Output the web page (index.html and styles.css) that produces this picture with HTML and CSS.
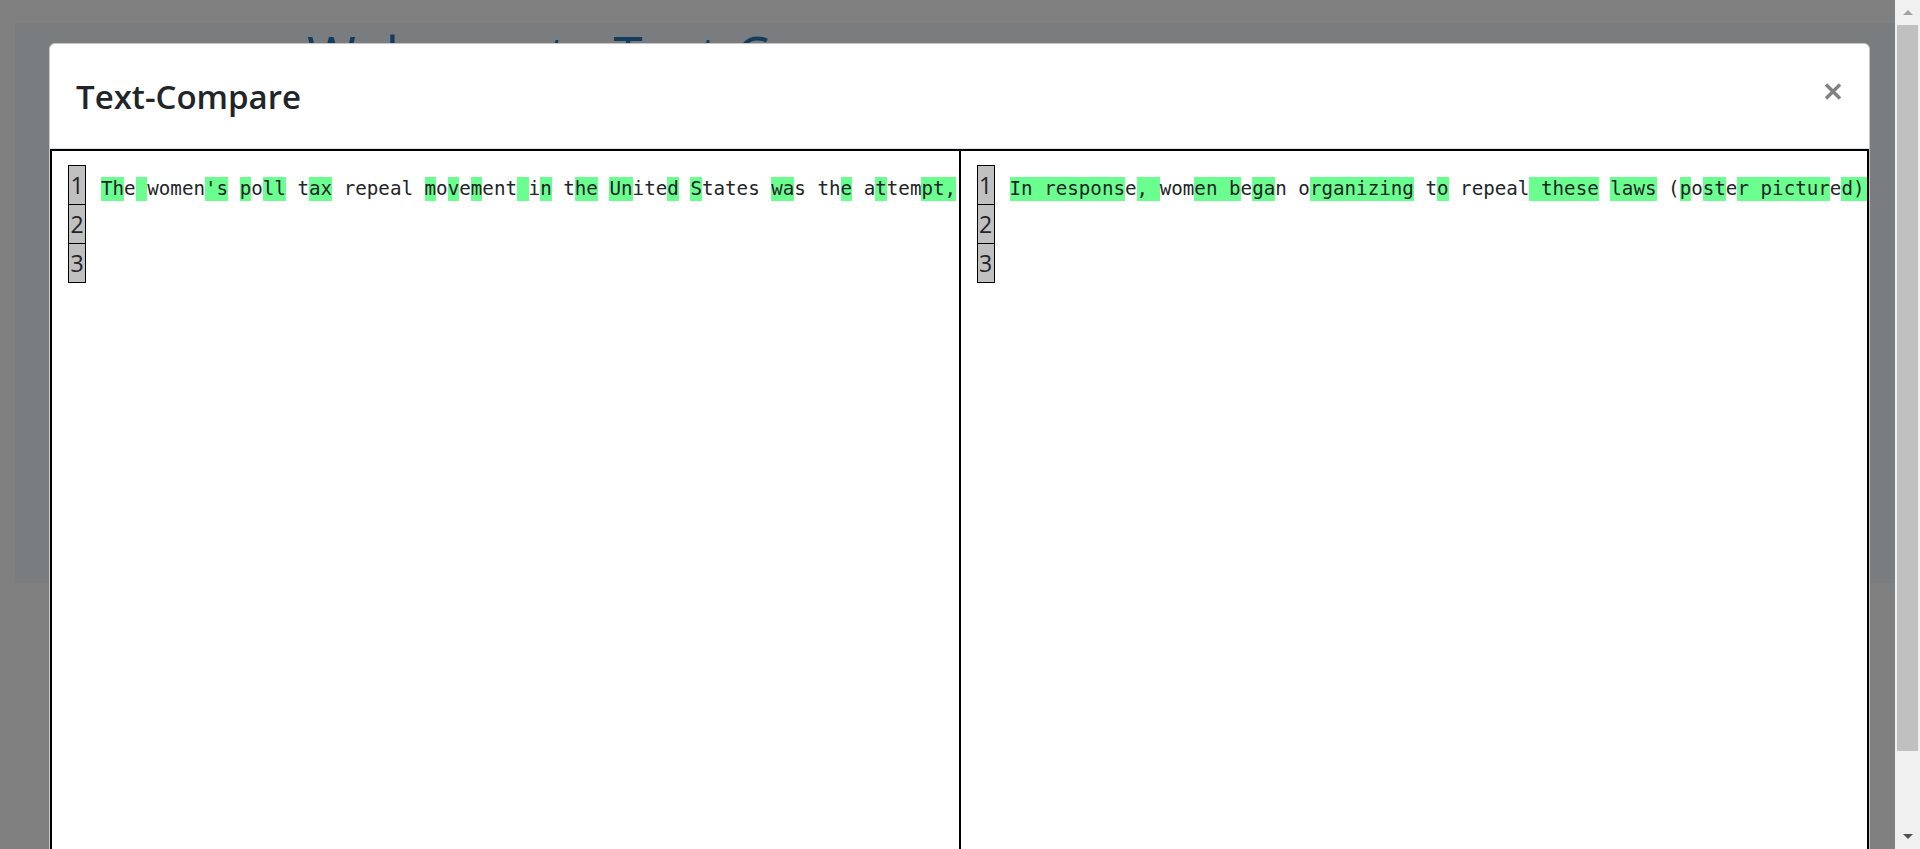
FILE: index.html
```html
<!DOCTYPE html>
<html lang="en">
<head>
<meta charset="utf-8">
<title>Text-Compare</title>
<link rel="stylesheet" href="styles.css">
</head>
<body>
<div class="screen">
  <div class="page">
    <div class="hero">
      <div class="container">
        <h1 class="display">Welcome to Text-Compare</h1>
      </div>
    </div>
  </div>
  <div class="scrollbar">
    <div class="sb-btn"><span class="tri-up"></span></div>
    <div class="sb-thumb"></div>
    <div class="sb-rest"></div>
    <div class="sb-btn"><span class="tri-down"></span></div>
  </div>
</div>

<div class="modal-layer">
  <div class="modal">
    <div class="modal-header">
      <h4 class="modal-title">Text-Compare</h4>
      <button class="close" type="button" aria-label="Close">
        <svg width="18" height="17" viewBox="0 0 18 17"><path d="M2 1.5 L16 15.5 M16 1.5 L2 15.5" stroke="#808080" stroke-width="3.4" fill="none"/></svg>
      </button>
    </div>
    <div class="compare">
      <div class="pane">
        <div class="gutter">
          <div class="ln">1</div>
          <div class="ln">2</div>
          <div class="ln">3</div>
        </div>
        <div class="code">
          <div class="line"><span class="hl">Th</span><span>e</span><span class="hl"> </span><span>women</span><span class="hl">'s</span><span> </span><span class="hl">p</span><span>o</span><span class="hl">ll</span><span> t</span><span class="hl">ax</span><span> repeal </span><span class="hl">m</span><span>o</span><span class="hl">v</span><span>e</span><span class="hl">m</span><span>ent</span><span class="hl"> </span><span>i</span><span class="hl">n</span><span> t</span><span class="hl">he</span><span> </span><span class="hl">Un</span><span>ite</span><span class="hl">d</span><span> </span><span class="hl">S</span><span>tates </span><span class="hl">wa</span><span>s th</span><span class="hl">e</span><span> a</span><span class="hl">t</span><span>tem</span><span class="hl">pt,</span><span> in the 1930s and 1940s, by women to end the poll tax in the southern states.</span></div>
          <div class="line"></div>
          <div class="line"></div>
        </div>
      </div>
      <div class="pane">
        <div class="gutter">
          <div class="ln">1</div>
          <div class="ln">2</div>
          <div class="ln">3</div>
        </div>
        <div class="code">
          <div class="line"><span class="hl">In respons</span><span>e</span><span class="hl">, </span><span>wom</span><span class="hl">en b</span><span>e</span><span class="hl">ga</span><span>n o</span><span class="hl">rganizing</span><span> t</span><span class="hl">o</span><span> repeal</span><span class="hl"> these</span><span> </span><span class="hl">laws</span><span> (</span><span class="hl">p</span><span>o</span><span class="hl">st</span><span>e</span><span class="hl">r pictur</span><span>e</span><span class="hl">d),</span><span> arguing that the tax kept them from voting.</span></div>
          <div class="line"></div>
          <div class="line"></div>
        </div>
      </div>
    </div>
  </div>
</div>
</body>
</html>
```

FILE: styles.css
```css
* { box-sizing: border-box; }

html, body {
  margin: 0;
  padding: 0;
  height: 849px;
  overflow: hidden;
}

body {
  font-family: "Open Sans", "Noto Sans", sans-serif;
  color: #212529;
}

.screen {
  display: flex;
  height: 849px;
}

.page {
  flex: 1 1 auto;
  min-width: 0;
  background: #808080;
  padding-top: 28px;
}

.hero {
  margin-left: 15px;
  height: 560px;
  background: #7a7d7f;
}

.container {
  width: 1320px;
  margin: 0 auto;
  padding: 0 12px;
}

.display {
  margin: -5px 0 0 0;
  font-family: "Open Sans", sans-serif;
  font-weight: 400;
  font-size: 53px;
  line-height: 64px;
  color: #153c5c;
}

/* fake window scrollbar */
.scrollbar {
  width: 25px;
  flex: 0 0 25px;
  background: #f0f0f0;
  display: flex;
  flex-direction: column;
}

.sb-btn {
  height: 25px;
  flex: 0 0 25px;
  display: flex;
  align-items: center;
  justify-content: center;
}

.tri-up {
  width: 0;
  height: 0;
  border-left: 5px solid transparent;
  border-right: 5px solid transparent;
  border-bottom: 5px solid #a3a3a3;
}

.tri-down {
  width: 0;
  height: 0;
  border-left: 5px solid transparent;
  border-right: 5px solid transparent;
  border-top: 5px solid #505050;
}

.sb-thumb {
  height: 726px;
  flex: 0 0 726px;
  margin: 0 2px;
  background: #c0c0c0;
}

.sb-rest {
  flex: 1 1 auto;
}

/* modal */
.modal-layer {
  position: fixed;
  top: 0;
  left: 0;
  right: 25px;
  bottom: 0;
  overflow: hidden;
  padding: 43px 25px 0 49px;
}

.modal {
  background: #fff;
  border: 1px solid #c6c6c6;
  border-radius: 6px 6px 0 0;
  height: 900px;
}

.modal-header {
  display: flex;
  justify-content: space-between;
  align-items: flex-start;
  padding: 33px 27px 31px 26px;
  border-bottom: 1px solid #dee2e6;
}

.modal-title {
  margin: 0;
  font-family: "Open Sans", "Noto Sans", sans-serif;
  font-weight: 600;
  font-size: 33px;
  line-height: 40px;
  color: #212529;
}

.close {
  margin-top: 6px;
  padding: 0;
  border: 0;
  background: none;
  display: block;
  line-height: 0;
}

.compare {
  display: flex;
  border: 1px solid #000;
  height: 760px;
}

.pane {
  flex: 1 1 0;
  min-width: 0;
  border: 1px solid #000;
  overflow: hidden;
  display: flex;
  align-items: flex-start;
  padding: 14px 16px 0 16px;
}

.gutter {
  flex: 0 0 auto;
  display: flex;
  flex-direction: column;
}

.ln {
  width: 18px;
  height: 39px;
  border: 1px solid #000;
  border-top: 0;
  background: #c0c0c0;
  text-align: center;
  font-family: "Open Sans", "Noto Sans", sans-serif;
  font-size: 23px;
  line-height: 38px;
  color: #212529;
}

.ln:first-child {
  height: 40px;
  border-top: 1px solid #000;
}

.code {
  flex: 1 1 auto;
  min-width: 0;
  margin-left: 15px;
  padding-top: 12px;
}

.line {
  height: 39px;
  white-space: pre;
  font-family: "DejaVu Sans Mono", monospace;
  font-size: 19.2px;
  line-height: 24px;
  color: #212529;
}

.line span {
  display: inline-block;
  height: 24px;
  line-height: 24px;
  vertical-align: top;
}

.line .hl {
  background: #6bff8f;
}
```
